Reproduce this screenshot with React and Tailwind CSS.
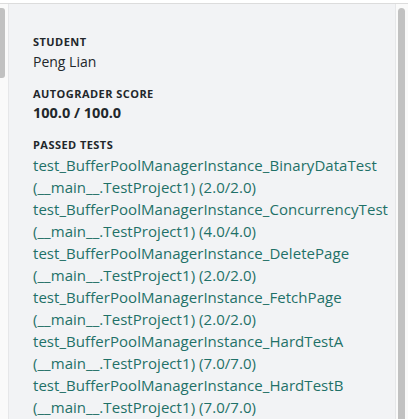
import React from 'react';

const tests = [
	['test_BufferPoolManagerInstance_BinaryDataTest', '2.0/2.0'],
	['test_BufferPoolManagerInstance_ConcurrencyTest', '4.0/4.0'],
	['test_BufferPoolManagerInstance_DeletePage', '2.0/2.0'],
	['test_BufferPoolManagerInstance_FetchPage', '2.0/2.0'],
	['test_BufferPoolManagerInstance_HardTestA', '7.0/7.0'],
	['test_BufferPoolManagerInstance_HardTestB', '7.0/7.0'],
];

function App() {
	return (
		<div
			className="h-[419px] w-[408px] overflow-hidden bg-white"
			style={{ fontFamily: '"Open Sans", "Liberation Sans", sans-serif' }}
		>
			<div className="mt-[3px] flex h-[416px] border-t border-[#dcdcdc]">
				<div className="w-[8px] shrink-0 bg-[#fafafa] pt-[4px]">
					<div className="h-[70px] w-[5px] rounded-r-[3px] bg-[#c1c1c1]" />
				</div>
				<div className="flex-1 border-x border-[#e6e7e9] bg-[#f2f3f5] pl-[24px] pt-[31px] text-[#22272b]">
					<p className="text-[11px] font-bold uppercase leading-[14px] tracking-[0.45px]">Student</p>
					<p className="mt-[4px] text-[14px] leading-[18px]">Peng Lian</p>

					<p className="mt-[16px] text-[11px] font-bold uppercase leading-[14px] tracking-[0.45px]">
						Autograder Score
					</p>
					<p className="mt-[2px] text-[14.5px] font-bold leading-[20px]">100.0 / 100.0</p>

					<p className="mt-[15px] text-[11px] font-bold uppercase leading-[14px] tracking-[0.45px]">
						Passed Tests
					</p>
					<div className="mt-[2px] text-[15px] leading-[22px] tracking-[0.05px] text-[#1f7168]">
						{tests.map(([name, score]) => (
							<div key={name}>
								<p className="whitespace-nowrap">{name}</p>
								<p className="whitespace-nowrap">(__main__.TestProject1) ({score})</p>
							</div>
						))}
					</div>
				</div>
				<div className="w-[12px] shrink-0 bg-[#fafafa] pl-[2px] pt-[4px]">
					<div className="h-[420px] w-[7px] rounded-t-[4px] bg-[#c1c1c1]" />
				</div>
			</div>
		</div>
	);
}

export default App;
